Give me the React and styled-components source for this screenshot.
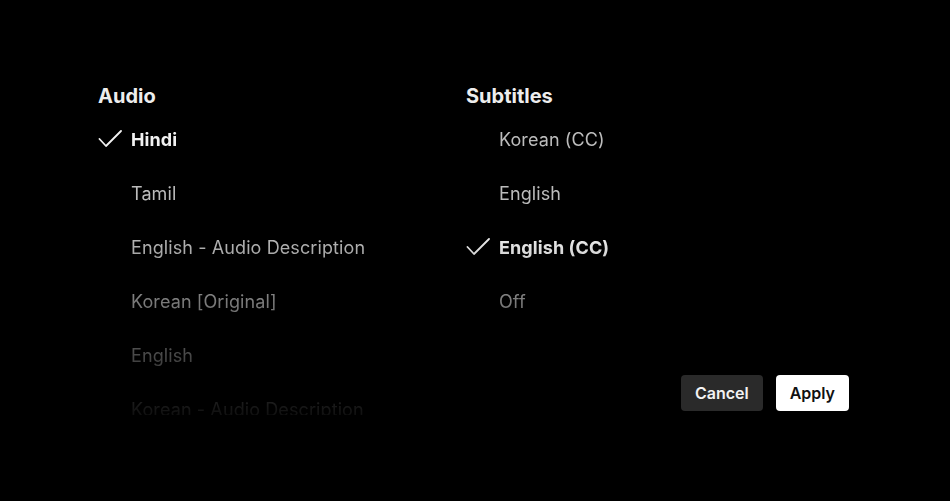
import styled, { createGlobalStyle } from 'styled-components';

const GlobalStyle = createGlobalStyle`
  html, body {
    margin: 0;
    background: #000;
  }
  body {
    font-family: Inter, "Noto Sans", "Liberation Sans", sans-serif;
    -webkit-font-smoothing: antialiased;
  }
`;

const Page = styled.div`
  width: 950px;
  height: 501px;
  background: #000;
  box-sizing: border-box;
  padding: 84px 0 0 98px;
`;

const Columns = styled.div`
  display: grid;
  grid-template-columns: 368px 383px;
  align-items: stretch;
`;

const Column = styled.div`
  display: flex;
  flex-direction: column;
`;

const Heading = styled.h2`
  margin: 0 0 4px;
  font-size: 20px;
  line-height: 24px;
  font-weight: 700;
  color: #ededed;
  letter-spacing: 0;
`;

// the lists fade out toward the bottom of the panel
const List = styled.ul`
  list-style: none;
  margin: 0;
  padding: 0;
  height: ${({ clip }) => (clip ? `${clip}px` : 'auto')};
  overflow: hidden;
  -webkit-mask-image: linear-gradient(to bottom, #000 120px, transparent 320px);
  mask-image: linear-gradient(to bottom, #000 120px, transparent 320px);
  -webkit-mask-size: 100% 320px;
  mask-size: 100% 320px;
  -webkit-mask-repeat: no-repeat;
  mask-repeat: no-repeat;
`;

const Item = styled.li`
  display: flex;
  align-items: center;
  height: 54px;
  font-size: 18px;
  letter-spacing: 0.1px;
  font-weight: ${({ selected }) => (selected ? 700 : 400)};
  color: ${({ selected }) => (selected ? '#f2f2f2' : '#bcbcbc')};
  white-space: nowrap;
`;

const CheckSlot = styled.span`
  width: 33px;
  flex: none;
  display: flex;
  align-items: center;
`;

const Actions = styled.div`
  margin-top: auto;
  margin-bottom: 4px;
  display: flex;
  justify-content: flex-end;
  gap: 13px;
`;

const Button = styled.button`
  height: 36px;
  padding: 0 ${({ primary }) => (primary ? '14px' : '14px')};
  border: none;
  border-radius: 4px;
  font-family: inherit;
  font-size: 16px;
  font-weight: 600;
  background: ${({ primary }) => (primary ? '#ffffff' : '#2a2a2a')};
  color: ${({ primary }) => (primary ? '#111' : '#f2f2f2')};
`;

const Check = () => (
  <svg width="24" height="18" viewBox="0 0 24 18" fill="none">
    <polyline
      points="1.5,9 8,16 23,1"
      stroke="#f2f2f2"
      strokeWidth="1.8"
      strokeLinecap="round"
      strokeLinejoin="round"
    />
  </svg>
);

const audio = [
  { label: 'Hindi', selected: true },
  { label: 'Tamil' },
  { label: 'English - Audio Description' },
  { label: 'Korean [Original]' },
  { label: 'English' },
  { label: 'Korean - Audio Description' },
];

const subtitles = [
  { label: 'Korean (CC)' },
  { label: 'English' },
  { label: 'English (CC)', selected: true },
  { label: 'Off' },
];

const OptionList = ({ options, clip }) => (
  <List clip={clip}>
    {options.map((o) => (
      <Item key={o.label} selected={o.selected}>
        <CheckSlot>{o.selected && <Check />}</CheckSlot>
        {o.label}
      </Item>
    ))}
  </List>
);

export default function App() {
  return (
    <Page>
      <GlobalStyle />
      <Columns>
        <Column>
          <Heading>Audio</Heading>
          <OptionList options={audio} clip={303} />
        </Column>
        <Column>
          <Heading>Subtitles</Heading>
          <OptionList options={subtitles} />
          <Actions>
            <Button>Cancel</Button>
            <Button primary>Apply</Button>
          </Actions>
        </Column>
      </Columns>
    </Page>
  );
}
